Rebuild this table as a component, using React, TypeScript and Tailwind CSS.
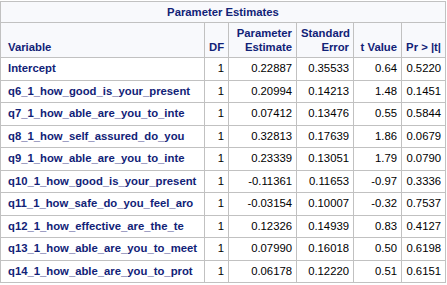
import React from "react";

const rows: [string, string, string, string, string, string][] = [
  ["Intercept", "1", "0.22887", "0.35533", "0.64", "0.5220"],
  ["q6_1_how_good_is_your_present", "1", "0.20994", "0.14213", "1.48", "0.1451"],
  ["q7_1_how_able_are_you_to_inte", "1", "0.07412", "0.13476", "0.55", "0.5844"],
  ["q8_1_how_self_assured_do_you", "1", "0.32813", "0.17639", "1.86", "0.0679"],
  ["q9_1_how_able_are_you_to_inte", "1", "0.23339", "0.13051", "1.79", "0.0790"],
  ["q10_1_how_good_is_your_present", "1", "-0.11361", "0.11653", "-0.97", "0.3336"],
  ["q11_1_how_safe_do_you_feel_aro", "1", "-0.03154", "0.10007", "-0.32", "0.7537"],
  ["q12_1_how_effective_are_the_te", "1", "0.12326", "0.14939", "0.83", "0.4127"],
  ["q13_1_how_able_are_you_to_meet", "1", "0.07990", "0.16018", "0.50", "0.6198"],
  ["q14_1_how_able_are_you_to_prot", "1", "0.06178", "0.12220", "0.51", "0.6151"],
];

export default function App() {
  const hd =
    "border border-[#c1c1c1] font-bold text-[#112277] leading-[14px] align-bottom whitespace-nowrap bg-[#f8f9fc]";
  const num =
    "border border-[#c1c1c1] text-black text-right px-[4px] align-middle whitespace-nowrap";
  return (
    <div
      className="bg-white w-[447px] h-[285px] pt-[1px]"
      style={{ fontFamily: '"Liberation Sans", Arial, sans-serif' }}
    >
      <table className="border-collapse table-fixed w-[445px] text-[11.3px]">
        <colgroup>
          <col className="w-[204px]" />
          <col className="w-[24px]" />
          <col className="w-[68px]" />
          <col className="w-[57px]" />
          <col className="w-[48px]" />
          <col className="w-[44px]" />
        </colgroup>
        <thead>
          <tr className="h-[21px]">
            <th colSpan={6} className={`${hd} text-center !align-middle px-[6px]`}>
              Parameter Estimates
            </th>
          </tr>
          <tr className="h-[35px]">
            <th className={`${hd} text-left px-[7px] pb-[3px]`}>Variable</th>
            <th className={`${hd} text-right px-[4px] pb-[3px]`}>DF</th>
            <th className={`${hd} text-right px-[4px] pb-[3px]`}>
              Parameter
              <br />
              Estimate
            </th>
            <th className={`${hd} text-right px-[4px] pb-[3px]`}>
              Standard
              <br />
              Error
            </th>
            <th className={`${hd} text-right px-[4px] pb-[3px]`}>t Value</th>
            <th className={`${hd} text-right px-[4px] pb-[3px]`}>Pr &gt; |t|</th>
          </tr>
        </thead>
        <tbody>
          {rows.map((r) => (
            <tr key={r[0]} className="h-[22.5px]">
              <th className="border border-[#c1c1c1] font-bold text-[#112277] text-left px-[7px] align-middle whitespace-nowrap">
                {r[0]}
              </th>
              {r.slice(1).map((v, i) => (
                <td key={i} className={num}>
                  {v}
                </td>
              ))}
            </tr>
          ))}
        </tbody>
      </table>
    </div>
  );
}
